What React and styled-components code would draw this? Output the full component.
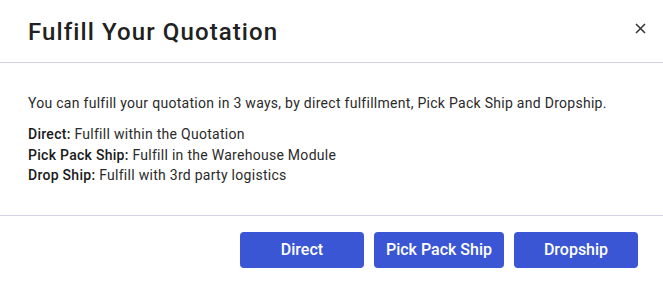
import React from "react";
import styled, { createGlobalStyle } from "styled-components";

const Global = createGlobalStyle`
  html, body { margin: 0; padding: 0; background: #fff; }
  body { font-family: Roboto, "Noto Sans", Arial, sans-serif; color: #212121; }
`;

const Dialog = styled.div`
  width: 663px;
  height: 282px;
  background: #fff;
  display: flex;
  flex-direction: column;
`;

const Header = styled.div`
  height: 63px;
  box-sizing: border-box;
  padding: 0 16px 0 28px;
  display: flex;
  align-items: center;
  justify-content: space-between;
  border-bottom: 1px solid #d6d0e4;
`;

const Title = styled.h2`
  margin: 0;
  font-size: 24px;
  font-weight: 500;
  letter-spacing: 1.1px;
  color: #212121;
  line-height: 28px;
  padding-top: 2px;
`;

const Close = styled.button`
  border: none;
  background: none;
  padding: 0;
  width: 14px;
  height: 14px;
  display: flex;
  align-items: center;
  justify-content: center;
  cursor: pointer;
  margin-top: -6px;
`;

const Body = styled.div`
  padding: 30px 28px 29px 28px;
  border-bottom: 1px solid #d6d0e4;
  font-size: 14px;
  letter-spacing: 0.28px;
  color: #2a2a2a;
`;

const Intro = styled.p`
  margin: 0 0 11px 0;
  line-height: 20px;
`;

const Line = styled.div`
  line-height: 20.5px;
`;

const Label = styled.span`
  font-weight: 500;
  color: #1a1a1a;
`;

const Footer = styled.div`
  display: flex;
  justify-content: flex-end;
  gap: 10px;
  padding: 16px 25px 0 0;
`;

const Button = styled.button`
  height: 36px;
  min-width: ${(p) => p.$w}px;
  padding: 0 12px;
  box-sizing: border-box;
  border: none;
  border-radius: 4px;
  background: #3a56d4;
  color: #fff;
  font-family: Roboto, "Noto Sans", Arial, sans-serif;
  font-size: 16px;
  font-weight: 500;
  cursor: pointer;
`;

export default function App() {
  return (
    <>
      <Global />
      <Dialog>
        <Header>
          <Title>Fulfill Your Quotation</Title>
          <Close aria-label="Close">
            <svg width="11" height="11" viewBox="0 0 11 11">
              <path d="M1 1L10 10M10 1L1 10" stroke="#333" strokeWidth="1.5" />
            </svg>
          </Close>
        </Header>
        <Body>
          <Intro>
            You can fulfill your quotation in 3 ways, by direct fulfillment, Pick Pack Ship and Dropship.
          </Intro>
          <Line>
            <Label>Direct:</Label> Fulfill within the Quotation
          </Line>
          <Line>
            <Label>Pick Pack Ship:</Label> Fulfill in the Warehouse Module
          </Line>
          <Line>
            <Label>Drop Ship:</Label> Fulfill with 3rd party logistics
          </Line>
        </Body>
        <Footer>
          <Button $w={124}>Direct</Button>
          <Button $w={130}>Pick Pack Ship</Button>
          <Button $w={124}>Dropship</Button>
        </Footer>
      </Dialog>
    </>
  );
}
